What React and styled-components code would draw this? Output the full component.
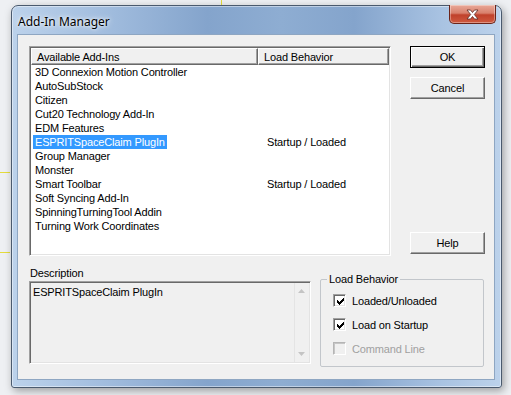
import styled, { createGlobalStyle } from "styled-components";

const GlobalStyle = createGlobalStyle`
  html, body {
    margin: 0;
    padding: 0;
  }
  body {
    background-color: #eef0f3;
    background-image:
      linear-gradient(#e5dc3c, #e5dc3c),
      linear-gradient(#e5dc3c, #e5dc3c),
      linear-gradient(#e5dc3c, #e5dc3c);
    background-size: 1px 6px, 10px 1px, 10px 1px;
    background-position: 221px 0, 0 172px, 0 252px;
    background-repeat: no-repeat;
    width: 511px;
    height: 395px;
    overflow: hidden;
    font-family: "Liberation Sans", Arial, sans-serif;
    font-size: 11px;
    letter-spacing: -0.15px;
    color: #000;
  }
`;

const Page = styled.div`
  padding: 5px 0 0 11px;
`;

const Window = styled.div`
  width: 491px;
  height: 383px;
  box-sizing: border-box;
  border: 1px solid #4a5a6e;
  border-radius: 7px 7px 3px 3px;
  background: linear-gradient(90deg, #bcd2eb 0%, #a3bedf 18%, #84a4cc 40%, #8eadd2 55%, #84a4cc 70%, #a9c3e2 88%, #bcd2eb 100%);
  box-shadow: 2px 3px 8px rgba(0, 0, 0, 0.35), inset 0 0 0 1px rgba(255, 255, 255, 0.45);
  display: flex;
  flex-direction: column;
  padding: 0 6px 7px 5px;
`;

const TitleBar = styled.div`
  height: 28px;
  display: flex;
  align-items: flex-start;
  justify-content: space-between;
`;

const Title = styled.div`
  font-family: "Noto Sans", "Liberation Sans", sans-serif;
  font-size: 12px;
  letter-spacing: 0;
  color: #000;
  padding: 7px 0 0 1px;
  text-shadow: 0 0 6px rgba(255, 255, 255, 0.9), 0 0 3px rgba(255, 255, 255, 0.9);
`;

const CloseButton = styled.div`
  width: 47px;
  height: 19px;
  box-sizing: border-box;
  margin-right: -1px;
  margin-top: -1px;
  border: 1px solid #6b2419;
  border-top: none;
  border-radius: 0 0 5px 5px;
  background: linear-gradient(#e9a999 0%, #d8806c 45%, #c0412b 55%, #cf5a40 100%);
  box-shadow: inset 0 0 0 1px rgba(255, 255, 255, 0.35);
  display: flex;
  align-items: center;
  justify-content: center;
`;

const Client = styled.div`
  flex: 1;
  background: #f0f0f0;
  border: 1px solid #8ea6c2;
  padding: 11px 9px 0 11px;
  display: flex;
  flex-direction: column;
`;

const TopRow = styled.div`
  display: flex;
  gap: 19px;
  height: 210px;
`;

const ListBox = styled.div`
  width: 362px;
  box-sizing: border-box;
  background: #fff;
  border-style: solid;
  border-width: 1px;
  border-color: #a0a0a0 #fff #fff #a0a0a0;
  box-shadow: inset 1px 1px 0 #696969, inset -1px -1px 0 #e3e3e3;
  padding: 1px;
  display: flex;
  flex-direction: column;
`;

const HeaderRow = styled.div`
  display: flex;
  height: 17px;
`;

const HeaderCell = styled.div`
  width: ${(p) => p.width}px;
  box-sizing: border-box;
  border-style: solid;
  border-width: 1px;
  border-color: #fff #696969 #696969 #fff;
  box-shadow: inset -1px -1px 0 #a0a0a0;
  background: #f0f0f0;
  padding: 1px 0 0 5px;
  line-height: 14px;
  white-space: nowrap;
`;

const Row = styled.div`
  display: flex;
  height: 14px;
  line-height: 14px;
  white-space: nowrap;
`;

const NameCell = styled.div`
  width: 227px;
  padding-left: 2px;
`;

const NameText = styled.span`
  display: inline-block;
  padding: 0 2px;
  background: ${(p) => (p.selected ? "#3399ff" : "transparent")};
  color: ${(p) => (p.selected ? "#fff" : "#000")};
`;

const BehaviorCell = styled.div`
  padding-left: 7px;
`;

const ButtonColumn = styled.div`
  display: flex;
  flex-direction: column;
  gap: 9px;
  width: 75px;
  padding-bottom: 2px;
`;

const Button = styled.div`
  height: 22px;
  box-sizing: border-box;
  display: flex;
  align-items: center;
  justify-content: center;
  background: #f0f0f0;
  border-style: solid;
  border-width: 1px;
  border-color: ${(p) => (p.$default ? "#000" : "#fff #696969 #696969 #fff")};
  box-shadow: ${(p) =>
    p.$default
      ? "inset 1px 1px 0 #fff, inset -1px -1px 0 #696969, inset -2px -2px 0 #a0a0a0"
      : "inset -1px -1px 0 #a0a0a0"};
  margin-top: ${(p) => (p.$bottom ? "auto" : "0")};
`;

const BottomRow = styled.div`
  display: flex;
  gap: 9px;
  margin-top: 11px;
`;

const DescColumn = styled.div`
  width: 282px;
  display: flex;
  flex-direction: column;
`;

const Label = styled.div`
  height: 14px;
  line-height: 13px;
  padding-left: 1px;
`;

const DescBox = styled.div`
  height: 83px;
  box-sizing: border-box;
  border-style: solid;
  border-width: 1px;
  border-color: #a0a0a0 #fff #fff #a0a0a0;
  box-shadow: inset 1px 1px 0 #696969, inset -1px -1px 0 #e3e3e3;
  display: flex;
`;

const DescText = styled.div`
  flex: 1;
  padding: 3px 0 0 3px;
  line-height: 14px;
`;

const ScrollBar = styled.div`
  width: 13px;
  margin: 1px 2px 1px 0;
  border-left: 1px solid #e4e4e4;
  display: flex;
  flex-direction: column;
  justify-content: space-between;
  align-items: center;
  padding: 6px 0 6px;
`;

const GroupBox = styled.fieldset`
  width: 164px;
  height: 94px;
  box-sizing: border-box;
  margin: 6px 0 0;
  padding: 9px 0 0 12px;
  border: 1px solid #c2c6cb;
  border-radius: 2px;
  display: flex;
  flex-direction: column;
  gap: 11px;

  legend {
    padding: 0 2px;
    margin-left: -6px;
    line-height: 12px;
  }
`;

const CheckRow = styled.label`
  display: flex;
  align-items: center;
  gap: 6px;
  height: 13px;
  color: ${(p) => (p.disabled ? "#a0a0a0" : "#000")};
  white-space: nowrap;
`;

const CheckBox = styled.span`
  width: 13px;
  height: 13px;
  box-sizing: border-box;
  border-style: solid;
  border-width: 1px;
  border-color: ${(p) => (p.disabled ? "#b5b5b5 #fff #fff #b5b5b5" : "#a0a0a0 #fff #fff #a0a0a0")};
  box-shadow: ${(p) =>
    p.disabled ? "inset 1px 1px 0 #c6c6c6" : "inset 1px 1px 0 #696969, inset -1px -1px 0 #e3e3e3"};
  background: ${(p) => (p.disabled ? "#f0f0f0" : "#fff")};
  display: flex;
  align-items: center;
  justify-content: center;
  padding: 1px 0 0 1px;
`;

const addIns = [
  ["3D Connexion Motion Controller", ""],
  ["AutoSubStock", ""],
  ["Citizen", ""],
  ["Cut20 Technology Add-In", ""],
  ["EDM Features", ""],
  ["ESPRITSpaceClaim PlugIn", "Startup / Loaded", true],
  ["Group Manager", ""],
  ["Monster", ""],
  ["Smart Toolbar", "Startup / Loaded"],
  ["Soft Syncing Add-In", ""],
  ["SpinningTurningTool Addin", ""],
  ["Turning Work Coordinates", ""],
];

function Check() {
  return (
    <svg width="7" height="7" viewBox="0 0 7 7">
      <path d="M0 2 H1 V3 H2 V4 H3 V3 H4 V2 H5 V1 H6 V0 H7 V3 H6 V4 H5 V5 H4 V6 H3 V7 H2 V6 H1 V5 H0 Z" fill="#000" />
    </svg>
  );
}

function Arrow({ down }) {
  return (
    <svg width="7" height="4" viewBox="0 0 7 4">
      <path d={down ? "M0 0 H7 L3.5 4 Z" : "M0 4 H7 L3.5 0 Z"} fill="#c4c4c4" />
    </svg>
  );
}

export default function App() {
  return (
    <>
      <GlobalStyle />
      <Page>
        <Window>
          <TitleBar>
            <Title>Add-In Manager</Title>
            <CloseButton>
              <svg width="13" height="11" viewBox="0 0 13 11">
                <path
                  d="M1 1 L4.5 1 L6.5 3.5 L8.5 1 L12 1 L8.3 5.5 L12 10 L8.5 10 L6.5 7.5 L4.5 10 L1 10 L4.7 5.5 Z"
                  fill="#fff"
                  stroke="#5a2a22"
                  strokeWidth="0.8"
                />
              </svg>
            </CloseButton>
          </TitleBar>
          <Client>
            <TopRow>
              <ListBox>
                <HeaderRow>
                  <HeaderCell width={227}>Available Add-Ins</HeaderCell>
                  <HeaderCell width={131}>Load Behavior</HeaderCell>
                </HeaderRow>
                <div>
                  {addIns.map(([name, behavior, selected]) => (
                    <Row key={name}>
                      <NameCell>
                        <NameText selected={selected}>{name}</NameText>
                      </NameCell>
                      <BehaviorCell>{behavior}</BehaviorCell>
                    </Row>
                  ))}
                </div>
              </ListBox>
              <ButtonColumn>
                <Button $default>OK</Button>
                <Button>Cancel</Button>
                <Button $bottom>Help</Button>
              </ButtonColumn>
            </TopRow>
            <BottomRow>
              <DescColumn>
                <Label>Description</Label>
                <DescBox>
                  <DescText>ESPRITSpaceClaim PlugIn</DescText>
                  <ScrollBar>
                    <Arrow />
                    <Arrow down />
                  </ScrollBar>
                </DescBox>
              </DescColumn>
              <GroupBox>
                <legend>Load Behavior</legend>
                <CheckRow>
                  <CheckBox>
                    <Check />
                  </CheckBox>
                  Loaded/Unloaded
                </CheckRow>
                <CheckRow>
                  <CheckBox>
                    <Check />
                  </CheckBox>
                  Load on Startup
                </CheckRow>
                <CheckRow disabled>
                  <CheckBox disabled />
                  Command Line
                </CheckRow>
              </GroupBox>
            </BottomRow>
          </Client>
        </Window>
      </Page>
    </>
  );
}
